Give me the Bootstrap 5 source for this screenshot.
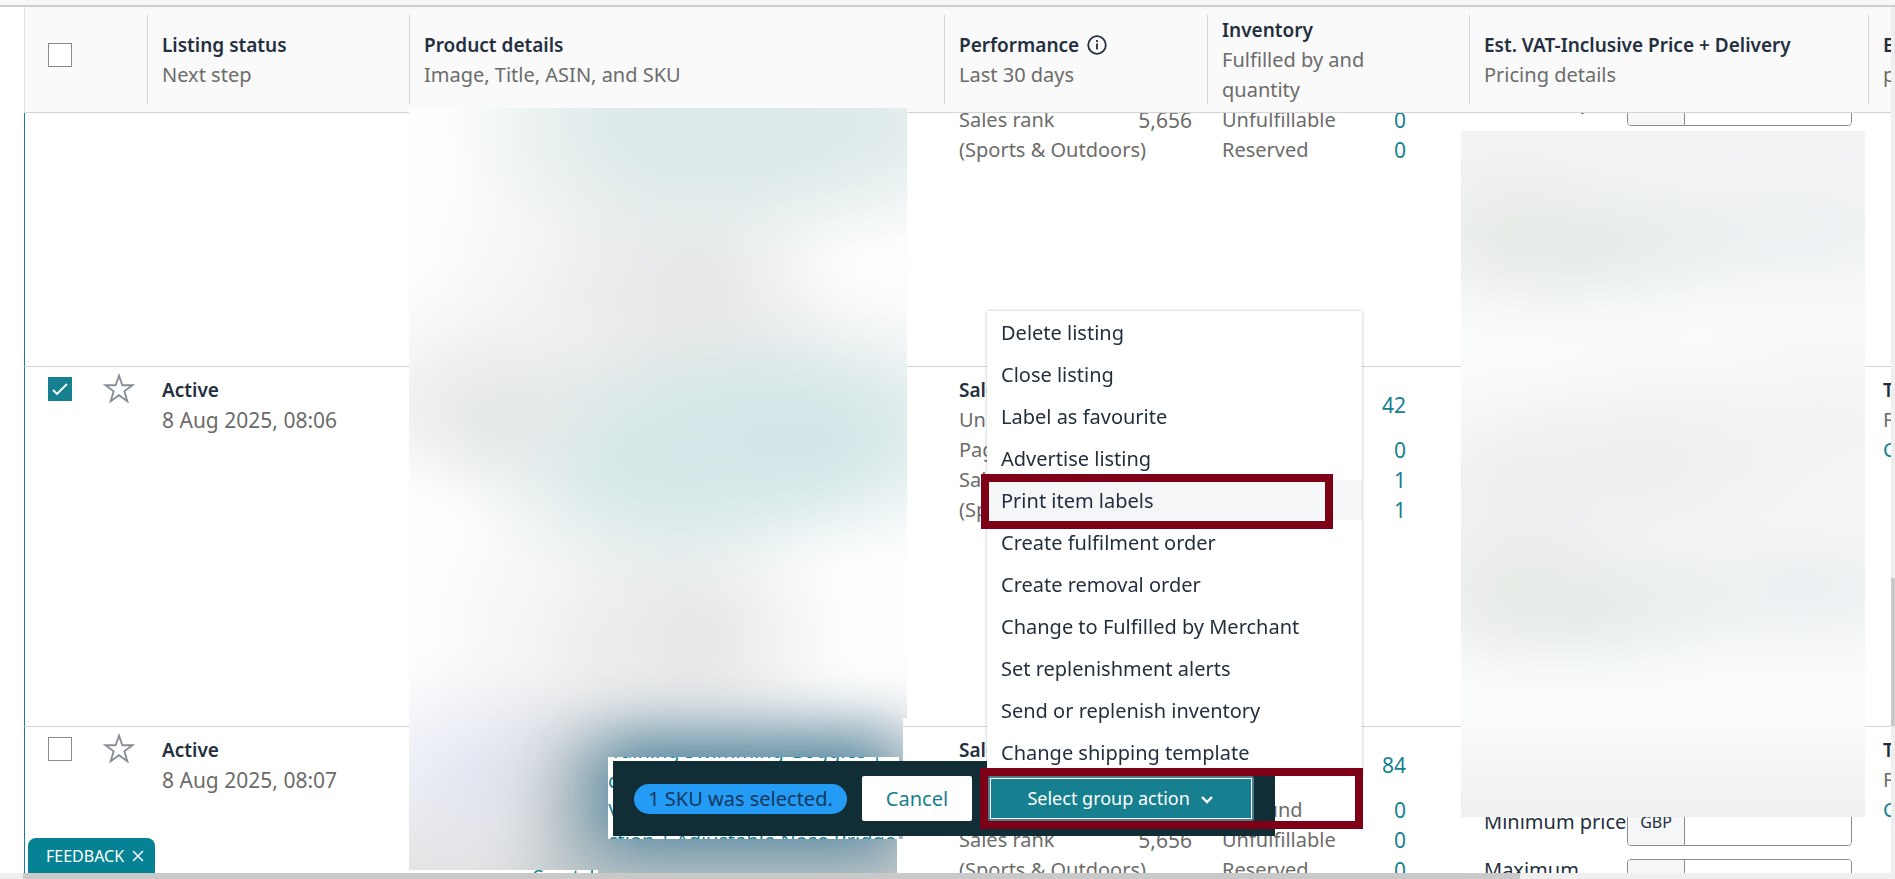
<!DOCTYPE html>
<html lang="en-GB">
<head>
<meta charset="utf-8">
<meta name="viewport" content="width=device-width, initial-scale=1">
<title>Manage inventory</title>
<link href="https://cdn.jsdelivr.net/npm/bootstrap@5.3.0/dist/css/bootstrap.min.css" rel="stylesheet">
<style>
  :root { --ink:#232f3e; --mute:#6c6c6a; --teal:#168090; --rule:#d3d6d6; --alert:#7d0016; }
  body { font-family:"Noto Sans", sans-serif; font-size:20px; line-height:30px; color:var(--mute); background:#fff; }
  .shell { height:100vh; overflow:hidden; }
  .top-strip { height:7px; background:#f7f7fa; border-bottom:2px solid #cacece; flex:none; }
  .listing-scroll { overflow:hidden; min-height:0; margin-left:24px; }
  .listing { width:calc(100% + 174px); table-layout:fixed; border-collapse:separate; border-spacing:0; }
  .listing th { position:sticky; top:0; z-index:2; height:106px; padding:0 12px 0 15px; background:#fafafa; border-bottom:1px solid var(--rule); font-weight:400; vertical-align:middle; }
  .listing th + th::before { content:""; position:absolute; left:0; top:8px; bottom:8px; width:1px; background:var(--rule); }
  .listing th:first-child { border-left:1px solid #d5e3e3; padding-bottom:10px; }
  .listing th.narrow { padding-right:60px; }
  .listing td { height:360px; padding:8px 15px; border-top:1px solid var(--rule); vertical-align:top; }
  .listing td:first-child { padding-top:10px; border-left:1px solid var(--teal); }
  .listing b { color:var(--ink); font-size:19px; font-weight:600; }
  .listing a { color:var(--teal); text-decoration:none; }
  .figure-text { font-size:21px; }
  .pick { appearance:none; width:24px; height:24px; margin:0; border:1px solid #888c8c; background:#fff; display:block; border-radius:0; flex:none; }
  .pick:checked { border-color:var(--teal); background:var(--teal) url("data:image/svg+xml,%3Csvg xmlns='http://www.w3.org/2000/svg' viewBox='0 0 24 24'%3E%3Cpath d='M5 13l4 4L19 7' fill='none' stroke='white' stroke-width='1.8'/%3E%3C/svg%3E") center/24px; }
  .star-btn { padding:0; margin:-4px 0 0 30px; border:0; background:none; line-height:0; }
  .two-line { height:60px; }
  .price-stack { padding-top:59px; }
  .price-row { padding:4px 0; margin-bottom:5px; }
  .price-row label { width:143px; color:var(--ink); white-space:nowrap; }
  .price-row.tall { padding:0; }
  .price-row.tall .money { margin-top:4px; }
  .money { width:225px; height:48px; border:1px solid #888c8c; border-radius:4px; overflow:hidden; }
  .money span { width:57px; background:#f5f6f8; border-right:1px solid #888c8c; font-size:16px; line-height:46px; text-align:center; color:var(--ink); }
  .money input { border:0; width:166px; outline:0; }

  /* frosted panels that hide private columns; the layers overshoot by 40px so the blur has no pale rim */
  .haze { position:absolute; overflow:hidden; z-index:3; }
  .haze::before { content:""; position:absolute; inset:-40px; filter:blur(18px); }
  .haze-product { left:409px; top:108px; width:498px; height:765px;
    clip-path:polygon(0 0,498px 0,498px 610px,494px 610px,494px 731px,488px 731px,488px 765px,189px 765px,189px 762px,0 762px); }
  .haze-product::before {
    background:
      linear-gradient(to top, #d9dadb, #d9dadb00 140px),
      radial-gradient(ellipse 170px 120px at 110px 710px, #e0e5f1, #e0e5f100),
      radial-gradient(ellipse 280px 150px at 350px 50px, #dce9e9 35%, #dce9e900),
      radial-gradient(ellipse 220px 120px at 510px 60px, #e6eeee, #e6eeee00),
      radial-gradient(ellipse 130px 90px at 120px 350px, #e4e7e8, #e4e7e800),
      radial-gradient(ellipse 220px 125px at 430px 370px, #d3e6e7 25%, #d3e6e700),
      radial-gradient(ellipse 210px 130px at 290px 395px, #d5e7e7 20%, #d5e7e700),
      radial-gradient(ellipse 150px 140px at 330px 220px, #e4e5e6, #e4e5e600),
      radial-gradient(ellipse 150px 140px at 330px 570px, #e3e5e6, #e3e5e600),
      radial-gradient(ellipse 170px 230px at 220px 220px, #efefef, #efefef00),
      radial-gradient(ellipse 170px 200px at 220px 580px, #f0efef, #f0efef00),
      radial-gradient(ellipse 440px 120px at 290px 310px, #e9ecec, #e9ecec00),
      #fefefe; }
  .glow { position:absolute; left:192px; top:634px; width:290px; height:105px; background:#4d83a0; filter:blur(32px); }
  .glow-wide { left:130px; top:625px; width:400px; height:170px; background:#b4bfc2; filter:blur(34px); }
  .haze-price { left:1461px; top:131px; width:404px; height:686px; }
  .haze-price::before {
    background:
      linear-gradient(to top, #eff0f0 40px, #eff0f000 130px),
      radial-gradient(ellipse 110px 90px at 90px 135px, #e8ece6, #e8ece600),
      radial-gradient(ellipse 190px 80px at 160px 155px, #e2e8e9, #e2e8e900),
      radial-gradient(ellipse 190px 80px at 370px 140px, #ebeff1, #ebeff100),
      radial-gradient(ellipse 110px 90px at 90px 495px, #e8ece6, #e8ece600),
      radial-gradient(ellipse 190px 80px at 160px 515px, #e2e8e9, #e2e8e900),
      radial-gradient(ellipse 190px 80px at 380px 498px, #eaeef0, #eaeef000),
      radial-gradient(ellipse 180px 110px at 230px 370px, #edecef, #edecef00),
      radial-gradient(ellipse 140px 110px at 100px 400px, #ededef, #ededef00),
      radial-gradient(ellipse 160px 120px at 410px 330px, #f2f2f2, #f2f2f200),
      linear-gradient(#f1f2f2, #f5f6f6 130px, #fafcfc 230px, #fafbfb 280px, #f7f7f7 370px, #f6f7f7 480px, #fbfdfd 600px, #fafafa 660px, #f3f4f4); }
  .title-peek { position:absolute; left:608px; top:757px; width:291px; height:82px; z-index:4; overflow:hidden; background:#fff; }
  .title-peek a { display:block; margin-top:-21px; color:var(--teal); text-decoration:none; white-space:pre; }
  .sku-peek { position:absolute; left:533px; top:870px; width:65px; height:3px; z-index:4; overflow:hidden; color:var(--teal); background:#fff; }
  .sku-peek span { display:block; margin-top:-8px; }

  .bulk-bar { position:absolute; left:613px; bottom:43px; width:662px; height:75px; padding:0 21px; background:#112d35; z-index:5; }
  .sku-pill { width:213px; height:30px; border-radius:15px; background:#249bf5; color:#14395f; text-align:center; white-space:nowrap; }
  .bulk-bar .btn { height:45px; padding:0; border-radius:2px; }
  .btn-cancel, .btn-cancel:hover { width:110px; margin-left:15px; background:#fff; color:var(--teal); font-size:20px; }
  .btn-group-action, .btn-group-action:hover { width:266px; margin-left:16px; background:var(--teal); color:#fff; font-size:18px; border:2px solid #4d7f90; box-shadow:inset 0 0 0 1px #fff; }
  .bulk-menu { position:absolute; left:374px; bottom:62px; width:375px; margin:0; padding:1px 0 0; list-style:none; background:#fff; box-shadow:0 0 3px #0004; }
  .bulk-menu a { display:block; height:42px; padding:0 14px; line-height:42px; color:var(--ink); text-decoration:none; }
  .bulk-menu a.current { background:linear-gradient(#f5f6f8,#f5f6f8) 0 0/100% 40px no-repeat; }
  .callout { position:absolute; border:8px solid var(--alert); pointer-events:none; z-index:6; }
  .callout-item { left:981px; top:474px; width:352px; height:55px; }
  .callout-button { left:980px; top:768px; width:383px; height:61px; }

  .feedback { position:absolute; left:28px; bottom:6px; width:127px; height:35px; padding:0 0 0 18px; border:0; border-radius:8px 8px 0 0; background:#058294; color:#fff; font-size:16px; z-index:5; }
  .bar-x { position:absolute; left:0; right:0; bottom:0; height:6px; background:#efefef; z-index:7; }
  .bar-x i { display:block; height:6px; margin-left:23px; width:79%; background:#c9c9c9; }
  .bar-y { position:absolute; right:0; top:7px; bottom:6px; width:4px; background:#efefef; z-index:7; }
  .bar-y i { display:block; height:148px; margin-top:571px; background:#c9c9c9; }
</style>
</head>
<body>
<svg class="d-none"><symbol id="star" viewBox="0 0 30 30"><path d="M15 2.500l3.100 9h9.400l-7.500 5.600 2.800 9.400-7.800-5.700-7.800 5.700 2.800-9.400L2.500 11.500h9.400z" fill="none" stroke="#878d96" stroke-width="1.700"/></symbol></svg>
<main class="shell position-relative d-flex flex-column">
  <div class="top-strip"></div>
  <div class="listing-scroll flex-grow-1" id="listing">
    <table class="listing">
      <colgroup><col style="width:123px"><col style="width:262px"><col><col style="width:263px"><col style="width:262px"><col style="width:399px"><col style="width:201px"></colgroup>
      <thead>
        <tr>
          <th><input class="pick ms-2" type="checkbox" aria-label="Select all listings"></th>
          <th><b>Listing status</b><br>Next step</th>
          <th><b>Product details</b><br>Image, Title, ASIN, and SKU</th>
          <th><div class="d-flex align-items-center"><b>Performance</b><svg class="ms-2" width="20" height="20" viewBox="0 0 20 20" fill="none" stroke="#232f3e" stroke-width="1.800" aria-hidden="true"><circle cx="10" cy="10" r="8.800"/><path d="M10 8.500v6M10 5v2"/></svg></div>Last 30 days</th>
          <th class="narrow"><b>Inventory</b><br>Fulfilled by and quantity</th>
          <th><b>Est. VAT-Inclusive Price + Delivery</b><br>Pricing details</th>
          <th><b>Estimated fees</b><br>per unit</th>
        </tr>
      </thead>
      <tbody id="rows"></tbody>
    </table>
  </div>

  <div class="haze haze-product"><div class="glow glow-wide"></div><div class="glow"></div></div>
  <div class="haze haze-price"></div>
  <div class="title-peek"><a href="#"> raining Swimming Goggles |
c
\
ction | Adjustable Nose Bridge |</a></div>
  <div class="sku-peek"><span>Scratch R</span></div>

  <div class="bulk-bar d-flex align-items-center">
    <div class="sku-pill">1 SKU was selected.</div>
    <button class="btn btn-cancel" type="button">Cancel</button>
    <button class="btn btn-group-action" type="button">Select group action <svg class="ms-1" width="16" height="12" viewBox="0 0 16 12" fill="none" stroke="#fff" stroke-width="2.400" aria-hidden="true"><path d="M3 3l5 5 5-5"/></svg></button>
    <ul class="bulk-menu">
      <li><a href="#">Delete listing</a></li>
      <li><a href="#">Close listing</a></li>
      <li><a href="#">Label as favourite</a></li>
      <li><a href="#">Advertise listing</a></li>
      <li><a href="#" class="current">Print item labels</a></li>
      <li><a href="#">Create fulfilment order</a></li>
      <li><a href="#">Create removal order</a></li>
      <li><a href="#">Change to Fulfilled by Merchant</a></li>
      <li><a href="#">Set replenishment alerts</a></li>
      <li><a href="#">Send or replenish inventory</a></li>
      <li><a href="#">Change shipping template</a></li>
    </ul>
  </div>
  <div class="callout callout-item"></div>
  <div class="callout callout-button"></div>

  <button class="feedback d-flex align-items-center" type="button">FEEDBACK<svg class="ms-2" width="12" height="12" viewBox="0 0 12 12" stroke="#fff" stroke-width="1.500" aria-hidden="true"><path d="M1 1l10 10M11 1L1 11"/></svg></button>
  <div class="bar-x"><i></i></div>
  <div class="bar-y"><i></i></div>
</main>
<script src="https://cdn.jsdelivr.net/npm/bootstrap@5.3.0/dist/js/bootstrap.bundle.min.js"></script>
<script>
  const listings = [
    { time: '08:05', picked: false, stock: [57, 0, 0, 0] },
    { time: '08:06', picked: true, stock: [42, 0, 1, 1] },
    { time: '08:07', picked: false, stock: [84, 0, 0, 0] }
  ];
  const line = (name, value) => `<div class="d-flex justify-content-between"><span>${name}</span><span class="figure-text">${value}</span></div>`;
  document.getElementById('rows').innerHTML = listings.map((item, n) => `
    <tr>
      <td><div class="d-flex align-items-start ps-2">
        <input class="pick" type="checkbox" aria-label="Select listing" ${item.picked ? 'checked' : ''}>
        <button class="star-btn" type="button" aria-label="Favourite"><svg width="34" height="32" viewBox="0 0 30 30"><use href="#star"/></svg></button></div></td>
      <td><b>Active</b><br><span class="figure-text">8 Aug 2025, ${item.time}</span></td>
      <td></td>
      <td><b>Sales</b>${line('Units sold', 0)}${line('Page views', 0)}${line('Sales rank', '5,656')}(Sports &amp; Outdoors)</td>
      <td><div class="pe-5">
        <div class="two-line d-flex justify-content-between align-items-center"><span>Available</span><a class="figure-text" href="#">${item.stock[0]}</a></div>
        ${['Inbound', 'Unfulfillable', 'Reserved'].map((name, i) => line(name, `<a href="#">${item.stock[i + 1]}</a>`)).join('')}
      </div></td>
      <td><div class="price-stack">
        <div class="price-row d-flex align-items-center"><label for="min${n}">Minimum price</label><div class="money d-flex"><span>GBP</span><input id="min${n}" type="text"></div></div>
        <div class="price-row tall d-flex align-items-start"><label for="max${n}">Maximum<br>price</label><div class="money d-flex"><span>GBP</span><input id="max${n}" type="text"></div></div>
      </div></td>
      <td><b>Total</b><br>Fees<br><a href="#">Cost</a></td>
    </tr>`).join('');
  /* open part-way down the list */
  document.getElementById('listing').scrollTop = 107;
</script>
</body>
</html>
